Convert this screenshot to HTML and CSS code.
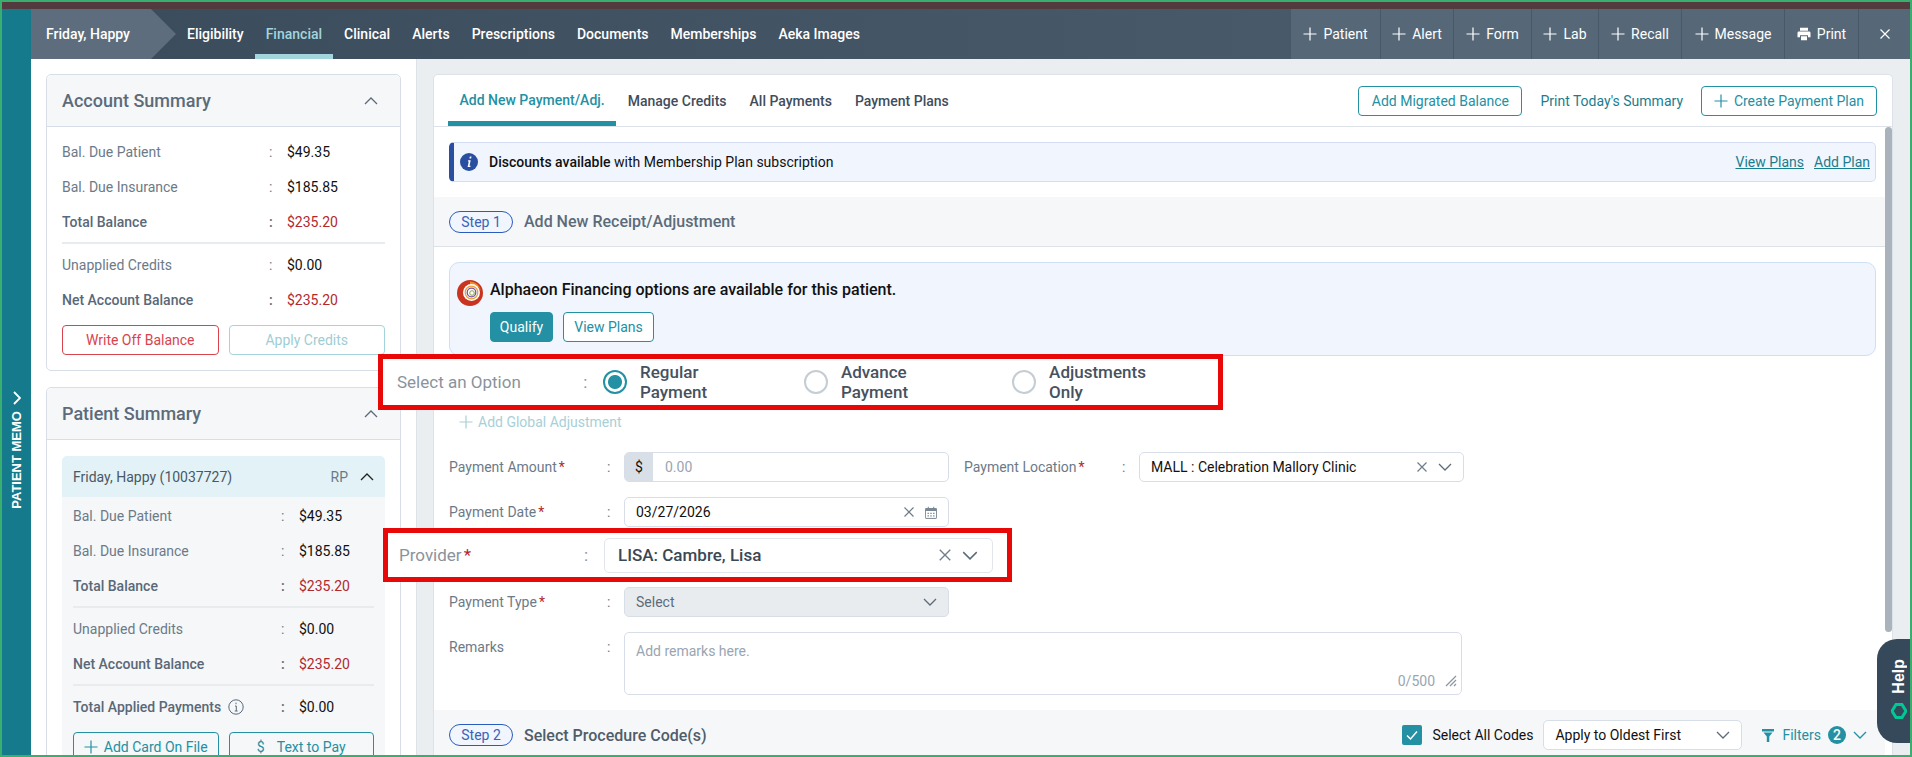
FILE: index.html
```html
<!DOCTYPE html>
<html>
  <head>
    <meta charset="utf-8">
    <title>Financial - Friday, Happy</title>
    <link rel="stylesheet" href="styles.css">
  </head>

  <body>
    <svg class="sprite" xmlns="http://www.w3.org/2000/svg">
      <symbol id="plus" viewBox="0 0 14 14"><path d="M7 .5v13M.5 7h13" fill="none" stroke="currentColor" stroke-width="1.2"/></symbol>
      <symbol id="cross" viewBox="0 0 12 12"><path d="M1.5 1.5l9 9M10.500 1.500l-9 9" fill="none" stroke="currentColor" stroke-width="1.2"/></symbol>
      <symbol id="down" viewBox="0 0 14 8"><path d="M1 1l6 6 6-6" fill="none" stroke="currentColor" stroke-width="1.3"/></symbol>
      <symbol id="up" viewBox="0 0 14 8"><path d="M1 7l6-6 6 6" fill="none" stroke="currentColor" stroke-width="1.3"/></symbol>
    </svg>

    <div class="frame">
      <div class="strip"></div>
      <div class="app">
        <div class="memo">
          <svg class="memo-arrow" viewBox="0 0 8 14" width="8" height="14"><path d="M1 1l6 6-6 6" fill="none" stroke="#fff" stroke-width="1.8"/></svg>
          <span class="memo-text">PATIENT MEMO</span>
        </div>

        <div class="workspace">
          <div class="nav">
            <div class="crumb">Friday, Happy</div>
            <a class="nav-link">Eligibility</a>
            <a class="nav-link active">Financial</a>
            <a class="nav-link">Clinical</a>
            <a class="nav-link">Alerts</a>
            <a class="nav-link">Prescriptions</a>
            <a class="nav-link">Documents</a>
            <a class="nav-link">Memberships</a>
            <a class="nav-link">Aeka Images</a>
            <div class="nav-actions">
              <a class="nav-action w-patient"><svg class="ico14"><use href="#plus"/></svg>Patient</a>
              <a class="nav-action w-alert"><svg class="ico14"><use href="#plus"/></svg>Alert</a>
              <a class="nav-action w-form"><svg class="ico14"><use href="#plus"/></svg>Form</a>
              <a class="nav-action w-lab"><svg class="ico14"><use href="#plus"/></svg>Lab</a>
              <a class="nav-action w-recall"><svg class="ico14"><use href="#plus"/></svg>Recall</a>
              <a class="nav-action w-message"><svg class="ico14"><use href="#plus"/></svg>Message</a>
              <a class="nav-action w-print">
                <svg class="ico14" viewBox="0 0 14 14"><path fill="currentColor" d="M3 .8h8v3H3zM1.800 4.600h10.400a1.300 1.300 0 0 1 1.300 1.300v4.300H11V8.300H3v1.900H.5V5.900a1.300 1.300 0 0 1 1.300-1.300zM4 9.300h6v3.900H4z"/></svg>Print
              </a>
              <a class="nav-action w-close"><svg class="ico12"><use href="#cross"/></svg></a>
            </div>
          </div>

          <div class="columns">
            <div class="side">
              <div class="card">
                <div class="card-head">
                  <span>Account Summary</span>
                  <svg class="ico-chev"><use href="#up"/></svg>
                </div>
                <div class="card-body">
                  <div class="row"><span>Bal. Due Patient</span><span>:</span><span class="val">$49.35</span></div>
                  <div class="row"><span>Bal. Due Insurance</span><span>:</span><span class="val">$185.85</span></div>
                  <div class="row strong"><span>Total Balance</span><span>:</span><span class="val due">$235.20</span></div>
                  <div class="sep"></div>
                  <div class="row"><span>Unapplied Credits</span><span>:</span><span class="val">$0.00</span></div>
                  <div class="row strong"><span>Net Account Balance</span><span>:</span><span class="val due">$235.20</span></div>
                  <div class="btn-pair">
                    <a class="btn btn-danger">Write Off Balance</a>
                    <a class="btn btn-off">Apply Credits</a>
                  </div>
                </div>
              </div>

              <div class="card card-second">
                <div class="card-head">
                  <span>Patient Summary</span>
                  <svg class="ico-chev"><use href="#up"/></svg>
                </div>
                <div class="card-body">
                  <div class="person-head">
                    <span>Friday, Happy (10037727)</span>
                    <span class="rp">RP</span>
                    <svg class="ico-chev dark"><use href="#up"/></svg>
                  </div>
                  <div class="person">
                    <div class="row"><span>Bal. Due Patient</span><span>:</span><span class="val">$49.35</span></div>
                    <div class="row"><span>Bal. Due Insurance</span><span>:</span><span class="val">$185.85</span></div>
                    <div class="row strong"><span>Total Balance</span><span>:</span><span class="val due">$235.20</span></div>
                    <div class="sep"></div>
                    <div class="row"><span>Unapplied Credits</span><span>:</span><span class="val">$0.00</span></div>
                    <div class="row strong"><span>Net Account Balance</span><span>:</span><span class="val due">$235.20</span></div>
                    <div class="sep"></div>
                    <div class="row strong">
                      <span class="with-info">Total Applied Payments
                        <svg class="info-line" viewBox="0 0 16 16"><circle cx="8" cy="8" r="7.200" fill="none" stroke="currentColor"/><path d="M8 3.600v1.600M7 7h1.300v5M6.800 12h2.800" fill="none" stroke="currentColor"/></svg>
                      </span>
                      <span>:</span><span class="val">$0.00</span>
                    </div>
                    <div class="btn-pair person-btns">
                      <a class="btn btn-line"><svg class="ico14"><use href="#plus"/></svg>Add Card On File</a>
                      <a class="btn btn-line"><span class="dollar">$</span>Text to Pay</a>
                    </div>
                  </div>
                </div>
              </div>
            </div>

            <div class="main">
              <div class="sheet">
                <div class="tabs">
                  <a class="tab active">Add New Payment/Adj.</a>
                  <a class="tab">Manage Credits</a>
                  <a class="tab">All Payments</a>
                  <a class="tab">Payment Plans</a>
                  <div class="tab-tools">
                    <a class="btn btn-line tool-migrated">Add Migrated Balance</a>
                    <a class="tool-link">Print Today's Summary</a>
                    <a class="btn btn-line tool-plan"><svg class="ico14"><use href="#plus"/></svg>Create Payment Plan</a>
                  </div>
                </div>

                <div class="scroller">
                  <div class="content">
                    <div class="notice">
                      <svg class="notice-ico" viewBox="0 0 18 18"><circle cx="9" cy="9" r="9" fill="#2a4fa0"/><path d="M9.800 3.500h1.700l-.4 1.900H9.400zM8.700 7.200h2l-1.200 5.600h1.100l-.3 1.300H7.600l1.200-5.600H7.900l.2-1.300z" fill="#fff"/></svg>
                      <span class="notice-text"><b>Discounts available</b> with Membership Plan subscription</span>
                      <a class="notice-link">View Plans</a>
                      <a class="notice-link">Add Plan</a>
                    </div>

                    <div class="step-band">
                      <span class="pill">Step 1</span>
                      <span class="step-title">Add New Receipt/Adjustment</span>
                    </div>

                    <div class="finance">
                      <svg class="finance-logo" viewBox="0 0 26 26">
                        <circle cx="13" cy="13" r="13" fill="#c9331f"/>
                        <path d="M13 1.500a11 11 0 0 1 11 9.500a9 9 0 0 0-11-5.500z" fill="#ee8a2c"/>
                        <circle cx="14.500" cy="12.500" r="8.500" fill="#fff"/>
                        <circle cx="14.500" cy="12.500" r="6.300" fill="none" stroke="#e9a13b" stroke-width="1.300"/>
                        <circle cx="14.500" cy="12.500" r="4.300" fill="none" stroke="#7d4fa3" stroke-width="1.300"/>
                        <circle cx="15" cy="13" r="2.300" fill="none" stroke="#7fa63c" stroke-width="1"/>
                      </svg>
                      <div>
                        <div class="finance-text">Alphaeon Financing options are available for this patient.</div>
                        <div class="finance-btns">
                          <a class="btn btn-solid">Qualify</a>
                          <a class="btn btn-line">View Plans</a>
                        </div>
                      </div>
                    </div>

                    <div class="callout callout-option">
                      <span class="callout-label">Select an Option</span>
                      <span class="callout-colon">:</span>
                      <span class="radio checked"></span><span class="radio-text">Regular Payment</span>
                      <span class="radio"></span><span class="radio-text">Advance Payment</span>
                      <span class="radio"></span><span class="radio-text">Adjustments Only</span>
                    </div>

                    <a class="add-global"><svg class="ico14"><use href="#plus"/></svg>Add Global Adjustment</a>

                    <div class="form-row row-amount">
                      <label class="form-label">Payment Amount<i>*</i></label><span class="form-colon">:</span>
                      <div class="field amount"><span class="prefix">$</span><span class="hint">0.00</span></div>
                      <label class="form-label second">Payment Location<i>*</i></label><span class="form-colon">:</span>
                      <div class="field">
                        <span class="field-text">MALL : Celebration Mallory Clinic</span>
                        <svg class="ico12 clear"><use href="#cross"/></svg>
                        <svg class="ico-down"><use href="#down"/></svg>
                      </div>
                    </div>

                    <div class="form-row row-date">
                      <label class="form-label">Payment Date<i>*</i></label><span class="form-colon">:</span>
                      <div class="field">
                        <span class="field-text">03/27/2026</span>
                        <svg class="ico12 clear"><use href="#cross"/></svg>
                        <svg class="ico-cal" viewBox="0 0 12 13"><path d="M1 2.500h10a.6.6 0 0 1 .6.6v8.700a.6.6 0 0 1-.6.6H1a.6.6 0 0 1-.6-.6V3.100a.6.6 0 0 1 .6-.6z" fill="none" stroke="#7b8794"/><path d="M.5 2.500h11v2.600H.5zM2.800.8h1v2h-1zM8.200.8h1v2h-1z" fill="#7b8794"/><path d="M2.500 6.800h1.400v1.200H2.500zM5.300 6.800h1.400v1.200H5.300zM8.100 6.800h1.400v1.200H8.100zM2.500 9.200h1.400v1.200H2.500zM5.300 9.200h1.400v1.200H5.300zM8.100 9.200h1.400v1.200H8.100z" fill="#7b8794"/></svg>
                      </div>
                    </div>

                    <div class="callout callout-provider">
                      <span class="callout-label">Provider<i>*</i></span>
                      <span class="callout-colon">:</span>
                      <div class="callout-field">
                        <span class="field-text">LISA: Cambre, Lisa</span>
                        <svg class="ico14 clear"><use href="#cross"/></svg>
                        <svg class="ico-down big"><use href="#down"/></svg>
                      </div>
                    </div>

                    <div class="form-row row-type">
                      <label class="form-label">Payment Type<i>*</i></label><span class="form-colon">:</span>
                      <div class="field field-off">
                        <span class="field-text">Select</span>
                        <svg class="ico-down"><use href="#down"/></svg>
                      </div>
                    </div>

                    <div class="form-row row-remarks">
                      <label class="form-label">Remarks</label><span class="form-colon">:</span>
                      <div class="remarks">
                        <span class="hint">Add remarks here.</span>
                        <div class="remarks-foot">
                          <span class="hint">0/500</span>
                          <svg class="grip" viewBox="0 0 12 12"><path d="M1 11L11 1M5 11l6-6M9 11l2-2" fill="none" stroke="#8d97a3" stroke-width="1.300"/></svg>
                        </div>
                      </div>
                    </div>

                    <div class="step-band step-two">
                      <span class="pill">Step 2</span>
                      <span class="step-title dark">Select Procedure Code(s)</span>
                      <div class="step-tools">
                        <span class="check"><svg viewBox="0 0 20 20" width="20" height="20"><path d="M5 10.500l3.500 3.500L15 6.500" fill="none" stroke="#fff" stroke-width="1.500"/></svg></span>
                        <span class="check-text">Select All Codes</span>
                        <div class="apply-select">
                          <span>Apply to Oldest First</span>
                          <svg class="ico-down"><use href="#down"/></svg>
                        </div>
                        <svg class="funnel" viewBox="0 0 12 13"><path d="M0 0h12v2.400H0zM1.500 3.600h9L7.300 7.400V13H4.800V7.400z" fill="#2390a3"/></svg>
                        <span class="filters">Filters</span>
                        <span class="badge">2</span>
                        <svg class="ico-down teal"><use href="#down"/></svg>
                      </div>
                    </div>
                  </div>
                  <div class="thumb"></div>
                </div>
              </div>
            </div>
          </div>
        </div>
      </div>

      <div class="help">
        <span class="help-text">Help</span>
        <svg class="help-ico" viewBox="0 0 16 16"><path d="M5 1.500h6L15 8l-4 6.500H5L1 8z" fill="none" stroke="#00c896" stroke-width="3"/></svg>
      </div>
    </div>
  </body>
</html>
```

FILE: styles.css
```css
*, *:before, *:after {
  box-sizing: border-box;
}
html, body {
  margin: 0;
  padding: 0;
}
body {
  width: 1912px;
  height: 757px;
  overflow: hidden;
  font-family: "Roboto", "Liberation Sans", sans-serif;
  font-size: 14px;
  color: #111;
  background: #fff;
}
a {
  cursor: pointer;
}
.sprite {
  display: none;
}
.ico12 {
  width: 12px;
  height: 12px;
  flex: none;
}
.ico14 {
  width: 14px;
  height: 14px;
  flex: none;
}

/* page frame */
.frame {
  position: relative;
  display: flex;
  flex-direction: column;
  width: 1912px;
  height: 757px;
  border: 2px solid #3aae6f;
  overflow: hidden;
}
.strip {
  height: 7px;
  flex: none;
  background: #533a3f;
}
.app {
  display: flex;
  flex: 1;
  min-height: 0;
}
.memo {
  display: flex;
  flex-direction: column;
  align-items: center;
  gap: 6px;
  width: 29px;
  flex: none;
  padding-top: 382px;
  background: #157a8c;
}
.memo-text {
  writing-mode: vertical-rl;
  transform: rotate(180deg);
  font-family: "Liberation Sans", sans-serif;
  font-size: 13px;
  font-weight: bold;
  color: #fff;
}
.workspace {
  display: flex;
  flex-direction: column;
  flex: 1;
  min-width: 0;
}

/* top nav */
.nav {
  display: flex;
  align-items: stretch;
  height: 50px;
  flex: none;
  background: linear-gradient(to right, #3a4b5b, #4f6071);
  color: #fff;
}
.crumb {
  display: flex;
  align-items: center;
  width: 145px;
  flex: none;
  padding-left: 15px;
  font-weight: 500;
  background: #5d6d7d;
  clip-path: polygon(0 0, 120px 0, 145px 50%, 120px 100%, 0 100%);
}
.nav-link {
  display: flex;
  align-items: center;
  padding: 0 11px;
  font-weight: 500;
  border-bottom: 5px solid transparent;
  padding-top: 5px;
}
.nav-link.active {
  color: #a3d5dc;
  border-bottom-color: #a3d5dc;
}
.nav-actions {
  display: flex;
  margin-left: auto;
  background: #566878;
}
.nav-action {
  display: flex;
  align-items: center;
  justify-content: center;
  gap: 6px;
  border-left: 1px solid #475868;
}
.w-patient { width: 90px; }
.w-alert { width: 73px; }
.w-form { width: 78px; }
.w-lab { width: 67px; }
.w-recall { width: 83px; }
.w-message { width: 103px; }
.w-print { width: 74px; }
.w-close { width: 52px; }

/* left column */
.columns {
  display: flex;
  flex: 1;
  min-height: 0;
}
.side {
  width: 386px;
  flex: none;
  padding: 15px;
  background: #fff;
  border-right: 1px solid #dde2e8;
}
.card {
  border: 1px solid #d8dee8;
  border-radius: 5px;
}
.card-second {
  margin-top: 16px;
}
.card-head {
  display: flex;
  align-items: center;
  justify-content: space-between;
  height: 52px;
  padding: 0 22px 0 15px;
  font-size: 18px;
  font-weight: 500;
  color: #5c6b7a;
  background: #f5f7f9;
  border-bottom: 1px solid #d8dee8;
  border-radius: 5px 5px 0 0;
}
.ico-chev {
  width: 14px;
  height: 8px;
  color: #5c6b7a;
}
.ico-chev.dark {
  color: #222;
}
.card-body {
  padding: 7px 15px 15px;
}
.row {
  display: grid;
  grid-template-columns: 207px 18px auto;
  align-items: center;
  height: 35px;
  color: #6c7a88;
}
.row.strong {
  font-weight: 500;
  color: #5a6877;
}
.val {
  font-weight: 400;
  color: #111;
}
.val.due {
  color: #b3282d;
}
.sep {
  height: 2px;
  margin: 3px 0;
  background: #e9ecef;
}
.btn-pair {
  display: flex;
  gap: 10px;
  margin-top: 8px;
}
.btn {
  display: flex;
  align-items: center;
  justify-content: center;
  gap: 6px;
  height: 30px;
  border: 1px solid #2390a3;
  border-radius: 4px;
  color: #2390a3;
}
.btn-pair .btn {
  flex: 1;
}
.btn-danger {
  color: #d9434e;
  border-color: #d9434e;
}
.btn-off {
  color: #a0cdd5;
  border-color: #a5d3da;
}
.btn-solid {
  color: #fff;
  background: #2390a3;
}
.card-second .card-body {
  padding-top: 16px;
}
.person-head {
  display: flex;
  align-items: center;
  height: 41px;
  padding: 0 11px;
  color: #4a5866;
  background: #e2f2f6;
  border-radius: 5px 5px 0 0;
}
.rp {
  margin-left: auto;
  margin-right: 12px;
  color: #6c7a88;
}
.person {
  padding: 1px 11px 0;
  background: #f5f7f9;
}
.person .row {
  grid-template-columns: 208px 18px auto;
}
.with-info {
  display: flex;
  align-items: center;
  gap: 7px;
}
.info-line {
  width: 16px;
  height: 16px;
}
.person-btns {
  margin-top: 8px;
}
.dollar {
  margin-right: 6px;
}

/* right column */
.main {
  flex: 1;
  min-width: 0;
  padding: 15px 17px 0 16px;
  background: #ebeef1;
}
.sheet {
  display: flex;
  flex-direction: column;
  height: 100%;
  background: #fff;
  border: 1px solid #dde2e8;
  border-bottom: 0;
  border-radius: 5px 5px 0 0;
}
.tabs {
  display: flex;
  align-items: stretch;
  height: 52px;
  flex: none;
  padding-left: 14px;
  border-bottom: 1px solid #dde2e8;
}
.tab {
  display: flex;
  align-items: center;
  padding: 0 11.5px;
  font-weight: 500;
  color: #3f4d5c;
}
.tab.active {
  color: #2390a3;
  border-bottom: 5px solid #2390a3;
  padding-top: 4px;
  margin-bottom: -0px;
}
.tab-tools {
  display: flex;
  align-items: center;
  gap: 18px;
  margin-left: auto;
  padding-right: 15px;
}
.tool-migrated {
  width: 164px;
}
.tool-plan {
  width: 176px;
}
.tool-link {
  color: #1a7d8e;
}
.scroller {
  display: flex;
  flex: 1;
  min-height: 0;
}
.content {
  flex: 1;
  min-width: 0;
  padding-top: 15px;
}
.thumb {
  width: 7px;
  height: 505px;
  flex: none;
  background: #aab2bc;
  border-radius: 4px;
}
.notice {
  display: flex;
  align-items: center;
  height: 40px;
  margin: 0 9px 0 15px;
  padding-right: 5px;
  background: #f0f5fe;
  border: 1px solid #d3def5;
  border-left: 5px solid #2a4fa0;
  border-radius: 5px;
}
.notice-ico {
  width: 18px;
  height: 18px;
  margin: 0 11px 0 6px;
  flex: none;
}
.notice-text {
  margin-right: auto;
}
.notice-text b {
  font-weight: 500;
}
.notice-link {
  margin-left: 10px;
  color: #1a7d8e;
  text-decoration: underline;
}
.step-band {
  display: flex;
  align-items: center;
  height: 50px;
  margin-top: 15px;
  padding: 0 15px;
  background: #f5f7f9;
  border-bottom: 1px solid #dde2e8;
}
.pill {
  display: flex;
  align-items: center;
  justify-content: center;
  width: 64px;
  height: 22px;
  margin-right: 11px;
  color: #3a63b8;
  background: #f0f5fe;
  border: 1px solid #2a5bbf;
  border-radius: 11px;
}
.step-title {
  font-size: 16px;
  font-weight: 500;
  color: #5c6b7a;
}
.step-title.dark {
  color: #4f5d6b;
}
.finance {
  display: flex;
  height: 94px;
  margin: 15px 9px 0 15px;
  padding: 17px 0 0 7px;
  background: #f0f5fe;
  border: 1px solid #cfe0f5;
  border-radius: 10px;
}
.finance-logo {
  width: 26px;
  height: 26px;
  margin-right: 7px;
  flex: none;
}
.finance-text {
  font-size: 16px;
  font-weight: 500;
  line-height: 20px;
  margin-bottom: 12px;
}
.finance-btns {
  display: flex;
  gap: 10px;
}
.finance-btns .btn {
  padding: 0 8px;
}
.finance-btns .btn-solid {
  width: 63px;
  padding: 0;
}
.finance-btns .btn-line {
  width: 91px;
  padding: 0;
  background: #fff;
}

/* the two red highlight boxes sit over the form */
.callout {
  position: relative;
  z-index: 2;
  display: flex;
  align-items: center;
  background: #fff;
  border: 5px solid #e80808;
}
.callout-option {
  width: 845px;
  height: 56px;
  margin: -2px 0 0 -56px;
  padding-left: 14px;
}
.callout-provider {
  width: 629px;
  height: 54px;
  margin: 1px 0 0 -51px;
  padding-left: 11px;
}
.callout-label {
  font-size: 17px;
  color: #8a939c;
}
.callout-label i {
  font-style: normal;
  color: #b3282d;
  margin-left: 2px;
}
.callout-option .callout-label {
  width: 189px;
}
.callout-provider .callout-label {
  width: 185px;
}
.callout-colon {
  font-size: 17px;
  color: #8a939c;
}
.callout-option .callout-colon {
  width: 20px;
}
.callout-provider .callout-colon {
  width: 20px;
}
.radio {
  width: 24px;
  height: 24px;
  flex: none;
  margin-right: 13px;
  border: 2px solid #c4ccd4;
  border-radius: 50%;
}
.radio.checked {
  border-color: #2390a3;
  background: radial-gradient(circle, #2390a3 0 6.500px, #fff 7.500px);
}
.radio-text {
  margin-right: 36px;
  font-size: 17px;
  font-weight: 500;
  color: #46525e;
}
.callout-field {
  display: flex;
  align-items: center;
  width: 389px;
  height: 35px;
  padding: 0 14px 0 13px;
  border: 1px solid #e2e6ec;
  border-radius: 5px;
}
.callout-field .field-text {
  font-size: 17px;
  font-weight: 500;
  color: #3b4753;
}
.add-global {
  display: flex;
  align-items: center;
  gap: 5px;
  height: 20px;
  margin: 2px 0 0 25px;
  color: #a8d0d8;
}

/* form */
.form-row {
  display: flex;
  margin-left: 15px;
}
.row-amount {
  margin-top: 20px;
}
.row-date {
  margin-top: 15px;
}
.row-type {
  margin-top: 5px;
}
.row-remarks {
  margin-top: 15px;
}
.form-label {
  display: block;
  width: 158px;
  line-height: 30px;
  color: #6c7a88;
}
.form-label i {
  font-style: normal;
  color: #b3282d;
  margin-left: 2px;
}
.form-label.second {
  margin-left: 15px;
}
.form-colon {
  width: 17px;
  line-height: 30px;
  color: #6c7a88;
}
.field {
  display: flex;
  align-items: center;
  width: 325px;
  height: 30px;
  padding: 0 11px;
  border: 1px solid #d8dee8;
  border-radius: 5px;
}
.field-text {
  margin-right: auto;
}
.field-off {
  background: #e9ecef;
}
.field-off .field-text {
  color: #5c6b7a;
}
.amount {
  padding: 0;
  overflow: hidden;
}
.prefix {
  width: 28px;
  height: 100%;
  line-height: 28px;
  text-align: center;
  background: #d8dfe6;
}
.hint {
  color: #9aa5b1;
}
.amount .hint {
  margin-left: 12px;
}
.clear {
  color: #6f7c89;
  margin-right: 10px;
}
.ico-down {
  width: 14px;
  height: 8px;
  flex: none;
  color: #5c6b7a;
}
.ico-down.big {
  width: 16px;
  height: 9px;
}
.ico-down.teal {
  color: #2390a3;
}
.ico-cal {
  width: 12px;
  height: 13px;
  flex: none;
}
.remarks {
  display: flex;
  flex-direction: column;
  justify-content: space-between;
  width: 838px;
  height: 63px;
  padding: 10px 4px 5px 11px;
  border: 1px solid #d8dee8;
  border-radius: 5px;
}
.remarks-foot {
  display: flex;
  justify-content: flex-end;
  align-items: center;
  gap: 10px;
}
.grip {
  width: 12px;
  height: 12px;
}
.step-two {
  border-bottom: 0;
  padding-right: 18px;
}
.step-tools {
  display: flex;
  align-items: center;
  margin-left: auto;
}
.check {
  width: 20px;
  height: 20px;
  margin-right: 10px;
  background: #2390a3;
  border-radius: 2px;
}
.check-text {
  margin-right: 10px;
}
.apply-select {
  display: flex;
  align-items: center;
  justify-content: space-between;
  width: 199px;
  height: 30px;
  margin-right: 20px;
  padding: 0 11px;
  background: #fff;
  border: 1px solid #d8dee8;
  border-radius: 5px;
}
.funnel {
  width: 12px;
  height: 13px;
  margin-right: 8px;
}
.filters {
  margin-right: 7px;
  color: #2390a3;
}
.badge {
  width: 18px;
  height: 18px;
  margin-right: 7px;
  line-height: 18px;
  text-align: center;
  font-weight: 500;
  color: #fff;
  background: #2390a3;
  border-radius: 50%;
}

/* floating help tab */
.help {
  position: absolute;
  top: 637px;
  right: 0;
  display: flex;
  flex-direction: column;
  align-items: center;
  gap: 9px;
  width: 33px;
  height: 104px;
  padding: 20px 0 0 10px;
  background: #36495a;
  border-radius: 20px 0 0 20px;
}
.help-text {
  writing-mode: vertical-rl;
  transform: rotate(180deg);
  font-family: "Liberation Sans", sans-serif;
  font-size: 16px;
  font-weight: bold;
  color: #fff;
}
.help-ico {
  width: 16px;
  height: 16px;
}
```
